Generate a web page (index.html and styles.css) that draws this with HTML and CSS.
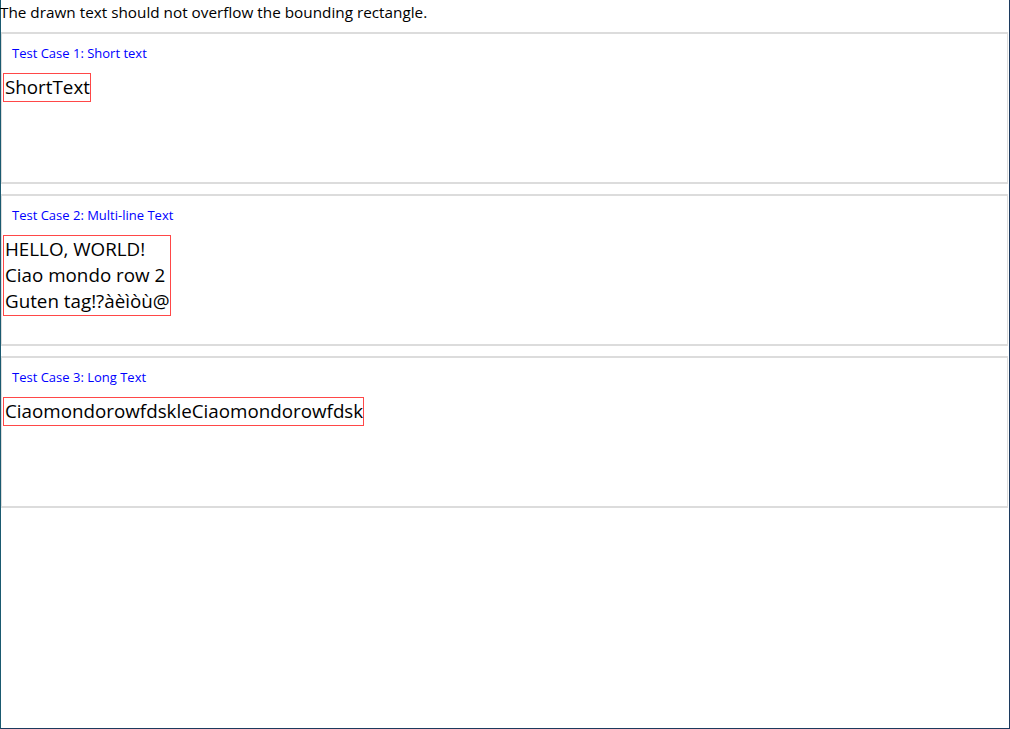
FILE: index.html
```html
<!DOCTYPE html>
<html>
<head>
<meta charset="utf-8">
<link rel="stylesheet" href="styles.css">
</head>
<body>
<div class="window">
  <div class="title">The drawn text should not overflow the bounding rectangle.</div>
  <div class="card">
    <div class="label">Test Case 1: Short text</div>
    <div class="row"><span class="box">ShortText</span></div>
  </div>
  <div class="card">
    <div class="label">Test Case 2: Multi-line Text</div>
    <div class="row"><span class="box">HELLO, WORLD!<br>Ciao mondo row 2<br>Guten tag!?àèìòù@</span></div>
  </div>
  <div class="card">
    <div class="label">Test Case 3: Long Text</div>
    <div class="row"><span class="box">CiaomondorowfdskleCiaomondorowfdsk</span></div>
  </div>
</div>
</body>
</html>
```
FILE: styles.css
```css
html, body {
  margin: 0;
  padding: 0;
  background: #ffffff;
}
.window {
  box-sizing: border-box;
  width: 1010px;
  height: 729px;
  border-left: 1px solid #1a5a70;
  border-right: 1px solid #1c3a5e;
  border-bottom: 1px solid #1c3a5e;
  font-family: "Open Sans", "Noto Sans", sans-serif;
  color: #000;
}
.title {
  height: 32px;
  font-size: 15.3px;
  line-height: 24px;
  margin-left: -1px;
}
.card {
  box-sizing: border-box;
  height: 152px;
  width: 1007px;
  margin-bottom: 10px;
  border: 2px solid #dcdcdc;
  border-left-width: 1px;
  border-right-width: 1px;
}
.label {
  color: #0000ff;
  font-size: 13px;
  line-height: 18px;
  padding: 10px 0 0 10px;
  height: 28px;
}
.row {
  display: flex;
  padding: 1px 0 0 1px;
}
.box {
  display: block;
  box-shadow: inset 0 0 0 1px #ff4848;
  font-size: 18.8px;
  line-height: 26px;
  padding: 1px 1px 2px 2px;
}
```
